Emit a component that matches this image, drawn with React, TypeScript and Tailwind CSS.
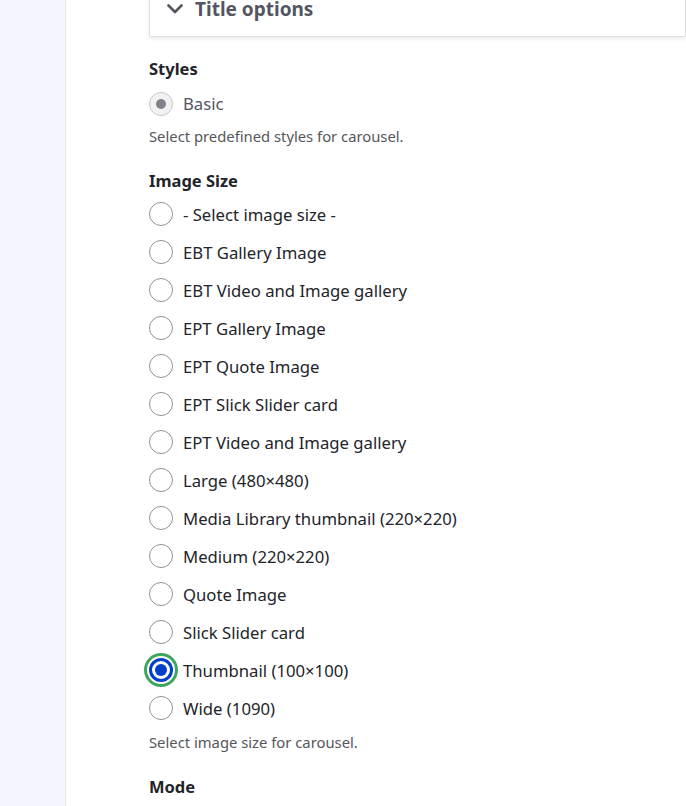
const SIZES = [
  '- Select image size -',
  'EBT Gallery Image',
  'EBT Video and Image gallery',
  'EPT Gallery Image',
  'EPT Quote Image',
  'EPT Slick Slider card',
  'EPT Video and Image gallery',
  'Large (480×480)',
  'Media Library thumbnail (220×220)',
  'Medium (220×220)',
  'Quote Image',
  'Slick Slider card',
  'Thumbnail (100×100)',
  'Wide (1090)',
]

function Radio({ checked, focused }: { checked?: boolean; focused?: boolean }) {
  if (checked) {
    return (
      <span
        className={`flex h-6 w-6 shrink-0 items-center justify-center rounded-full border-[3px] border-[#003ecc] bg-white ${
          focused ? 'shadow-[0_0_0_2px_#fff,0_0_0_5px_#3ea55f]' : ''
        }`}
      >
        <span className="h-3 w-3 rounded-full bg-[#003ecc]" />
      </span>
    )
  }
  return <span className="h-6 w-6 shrink-0 rounded-full border border-[#8e929c] bg-white" />
}

export default function App() {
  return (
    <div
      className="flex h-[806px] overflow-hidden bg-white text-[#232429]"
      style={{ fontFamily: '"Noto Sans", "Open Sans", sans-serif' }}
    >
      {/* sidebar */}
      <div className="w-[66px] shrink-0 border-r border-[#e3e7ef] bg-[#f3f6fd]" />

      <div className="flex-1 pl-[83px]">
        {/* collapsed details */}
        <div className="-mt-[14px] flex h-[51px] items-center gap-[12px] rounded-b-[2px] border border-t-0 border-[#dedfe4] bg-white pl-[17px] shadow-[0_2px_4px_rgba(0,0,0,0.08)]">
          <svg width="16" height="10" viewBox="0 0 16 10" className="-mt-[4px]" fill="none">
            <polyline points="1.5,1.5 8,8 14.5,1.5" stroke="#545560" strokeWidth="2.6" strokeLinecap="round" strokeLinejoin="round" />
          </svg>
          <span className="-mt-[4px] text-[19px] font-bold text-[#545560]">Title options</span>
        </div>

        {/* Styles */}
        <div className="mt-[22px]">
          <div className="text-[16.5px] font-bold leading-5">Styles</div>
          <label className="mt-[6px] flex h-[38px] items-center gap-[10px]">
            <span className="flex h-6 w-6 items-center justify-center rounded-full border border-[#c8c8cc] bg-[#f2f2f3]">
              <span className="h-[10px] w-[10px] rounded-full bg-[#82828c]" />
            </span>
            <span className="text-[16.7px] text-[#545560]">Basic</span>
          </label>
          <p className="mt-[2px] text-[14.8px] text-[#55565b]">Select predefined styles for carousel.</p>
        </div>

        {/* Image Size */}
        <div className="mt-[24px]">
          <div className="text-[16.5px] font-bold leading-5">Image Size</div>
          <div className="mt-[4px] flex flex-col">
            {SIZES.map((s) => {
              const checked = s.startsWith('Thumbnail')
              return (
                <label key={s} className="flex h-[38px] items-center gap-[10px]">
                  <Radio checked={checked} focused={checked} />
                  <span className="text-[16.7px] text-[#232429]">{s}</span>
                </label>
              )
            })}
          </div>
          <p className="mt-[4px] text-[14.8px] text-[#55565b]">Select image size for carousel.</p>
        </div>

        {/* Mode */}
        <div className="mt-[24px]">
          <div className="text-[16.5px] font-bold leading-5">Mode</div>
        </div>
      </div>
    </div>
  )
}
